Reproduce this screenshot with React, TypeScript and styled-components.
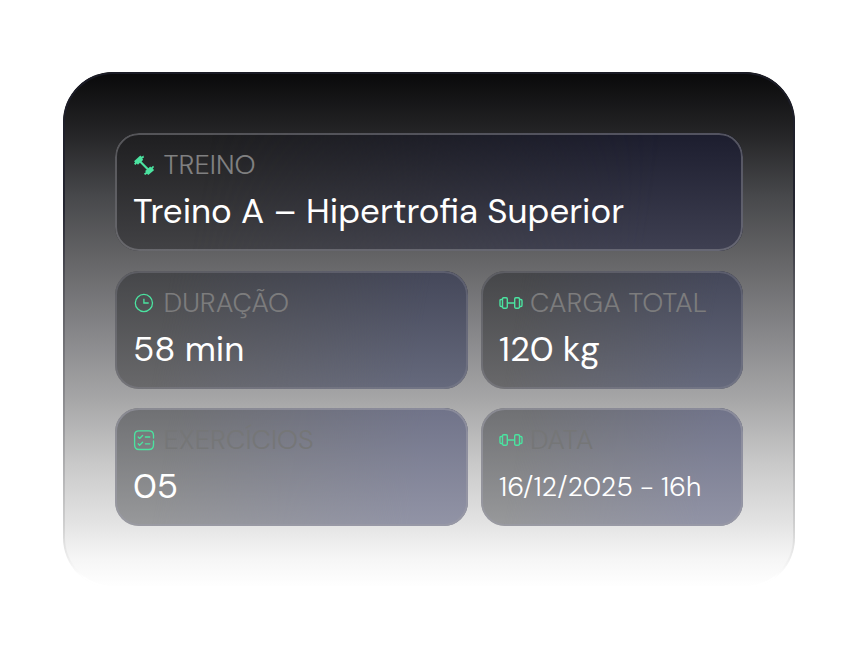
import React from "react";
import styled, { createGlobalStyle } from "styled-components";

const GlobalStyle = createGlobalStyle`
  * {
    box-sizing: border-box;
  }
  body {
    margin: 0;
    background: #ffffff;
    font-family: "DM Sans", Inter, "Liberation Sans", sans-serif;
  }
`;

const Page = styled.main`
  display: flex;
  justify-content: center;
  width: 858px;
  height: 659px;
  padding-top: 72px;
`;

const Card = styled.section`
  position: relative;
  display: flex;
  flex-direction: column;
  width: 732px;
  height: 516px;
  padding: 61px 52px 0;
  border-radius: 50px;
  background: linear-gradient(
    180deg,
    #09090a 0%,
    #252527 12%,
    #47484b 24%,
    #646466 36%,
    #858588 50%,
    #a5a5a6 63%,
    #c9c9c9 76%,
    #e2e2e2 87%,
    #f5f5f5 94%,
    #ffffff 100%
  );

  /* hairline that fades out with the card */
  &::after {
    content: "";
    position: absolute;
    inset: 0;
    padding: 2px;
    border-radius: inherit;
    background: linear-gradient(180deg, #1a1b25 0%, #242530 26%, #58585e 42%, #929295 66%, #d0d0d0 88%, #ffffff 98%);
    mask: linear-gradient(#000 0 0) content-box exclude, linear-gradient(#000 0 0);
    pointer-events: none;
  }
`;

const Row = styled.div<{ $gap?: number }>`
  display: grid;
  grid-template-columns: ${({ $gap }) => ($gap ? "353px 1fr" : "1fr")};
  gap: ${({ $gap }) => $gap || 0}px;
  height: 118px;
  & + & {
    margin-top: 20px;
  }
  &:nth-child(3) {
    margin-top: 19px;
  }
`;

type Tone = "dark" | "mid" | "light";

const tones: Record<Tone, { left: string; right: string; border: string }> = {
  dark: { left: "#1e1e20, #424245", right: "#1c1d2e, #3f4052", border: "#96969e73" },
  mid: { left: "#454649, #69696b", right: "#444759, #666a7d", border: "#8a8a9459" },
  light: { left: "#6f7073, #98999b", right: "#707389, #9294a6", border: "#9b9ba799" },
};

const Panel = styled.article<{ $tone: Tone }>`
  position: relative;
  display: flex;
  flex-direction: column;
  padding: 16px 18px 0;
  border-radius: 24px;
  overflow: hidden;
  background: linear-gradient(180deg, ${({ $tone }) => tones[$tone].left});

  &::before {
    content: "";
    position: absolute;
    inset: 0;
    background: linear-gradient(180deg, ${({ $tone }) => tones[$tone].right});
    mask-image: linear-gradient(100deg, transparent 15%, #000 85%);
  }
  &::after {
    content: "";
    position: absolute;
    inset: 0;
    border: 2px solid ${({ $tone }) => tones[$tone].border};
    border-radius: inherit;
  }
`;

const Label = styled.div<{ $color?: string; $indent?: number }>`
  position: relative;
  display: flex;
  align-items: center;
  height: 32px;
  color: ${({ $color }) => $color || "#808081"};
  font-size: 27.2px;
  font-weight: 330;
  line-height: 32px;
  white-space: nowrap;

  svg {
    flex: none;
    margin-right: ${({ $indent }) => $indent ?? 8.6}px;
    margin-top: -1px;
  }
`;

const Value = styled.div<{ $small?: boolean }>`
  position: relative;
  margin-top: 7px;
  color: #ffffff;
  font-size: ${({ $small }) => ($small ? 27 : 34.9)}px;
  font-weight: ${({ $small }) => ($small ? 330 : 400)};
  line-height: ${({ $small }) => ($small ? 48 : 46)}px;
  white-space: nowrap;
`;

const green = "#4be3a0";

function DiagonalDumbbell() {
  return (
    <svg width="22" height="22" viewBox="0 0 22 22" fill={green}>
      <path d="M1 7.2 7.3 1.4 8.7 2.8 10.4 1.5 11 3.5 9.2 4.6 10.2 5.7 8.6 7.4 15.4 14.2 17.2 12.6 18.2 13.6 20.1 11.7 21 13.1 19.7 14.8 21.2 16.1 15.3 21 14 19.8 12.2 21 10.9 19.8 13 18.1 12 17 13.8 15.7 6.9 8.8 5 10.7 3.8 9.5 2.4 11 1 9.7 2.2 8.3Z" />
    </svg>
  );
}

function Clock() {
  return (
    <svg width="22" height="22" viewBox="0 0 22 22" fill="none" stroke={green} strokeWidth="1.3">
      <circle cx="10.9" cy="11" r="8.6" />
      <path d="M10.9 6.8V11h4.8" />
    </svg>
  );
}

function Dumbbell() {
  return (
    <svg width="24" height="22" viewBox="0 0 24 22" fill="none" stroke={green} strokeWidth="1.4">
      <rect x="3.5" y="5.8" width="4.8" height="10.4" rx="1.1" />
      <rect x="15.7" y="5.8" width="4.8" height="10.4" rx="1.1" />
      <path d="M3.5 7.5H2.1Q1 7.5 1 8.7v4.6q0 1.2 1.1 1.2h1.4M20.5 7.5h1.4Q23 7.5 23 8.7v4.6q0 1.2-1.1 1.2h-1.4M8.3 11h7.4" />
    </svg>
  );
}

function Checklist() {
  return (
    <svg width="22" height="22" viewBox="0 0 22 22" fill="none" stroke={green} strokeWidth="1.35" strokeLinecap="round" strokeLinejoin="round">
      <path d="M20.5 9V6.3Q20.5 1.8 16 1.8H6Q1.6 1.8 1.6 6.3v9.4q0 4.8 4.4 4.8h10q4.5 0 4.5-4.8V12" />
      <path d="m5.2 8 1.4 1.4 3-3M5.2 14.8l1.4 1.4 3-3M12.4 8h4.4M12.4 14.8h4.4" />
    </svg>
  );
}

export default function App() {
  return (
    <>
      <GlobalStyle />
      <Page>
        <Card>
          <Row>
            <Panel $tone="dark">
              <Label>
                <DiagonalDumbbell />
                TREINO
              </Label>
              <Value>Treino A – Hipertrofia Superior</Value>
            </Panel>
          </Row>
          <Row $gap={13}>
            <Panel $tone="mid">
              <Label $color="#7c7c7d">
                <Clock />
                DURAÇÃO
              </Label>
              <Value>58 min</Value>
            </Panel>
            <Panel $tone="mid">
              <Label $indent={7} $color="#7c7c7d">
                <Dumbbell />
                CARGA TOTAL
              </Label>
              <Value>120 kg</Value>
            </Panel>
          </Row>
          <Row $gap={13}>
            <Panel $tone="light">
              <Label $color="#757677">
                <Checklist />
                EXERCÍCIOS
              </Label>
              <Value>05</Value>
            </Panel>
            <Panel $tone="light">
              <Label $indent={7} $color="#757677">
                <Dumbbell />
                DATA
              </Label>
              <Value $small>16/12/2025 - 16h</Value>
            </Panel>
          </Row>
        </Card>
      </Page>
    </>
  );
}
